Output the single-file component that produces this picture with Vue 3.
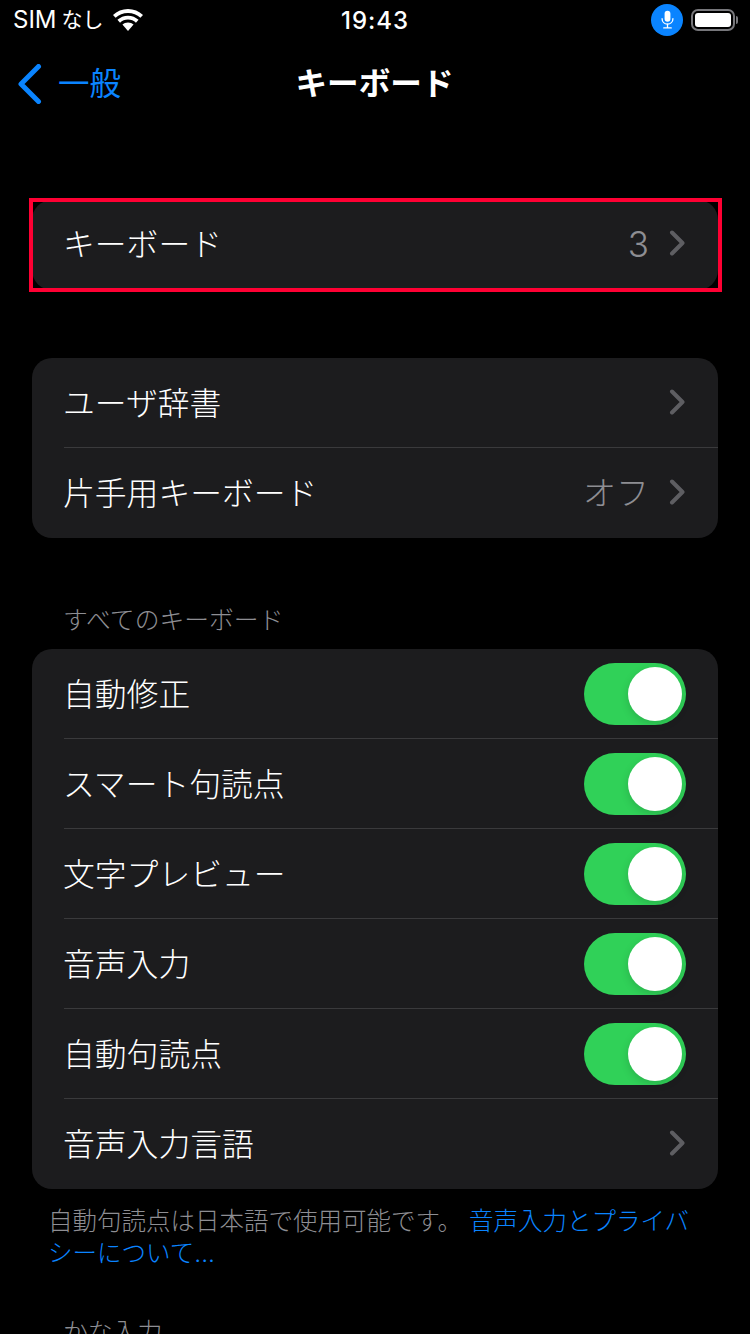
<script setup>
const group2 = [
  { label: 'ユーザ辞書', value: '' },
  { label: '片手用キーボード', value: 'オフ' },
]
const group3 = [
  { label: '自動修正', toggle: true },
  { label: 'スマート句読点', toggle: true },
  { label: '文字プレビュー', toggle: true },
  { label: '音声入力', toggle: true },
  { label: '自動句読点', toggle: true },
  { label: '音声入力言語', toggle: false },
]
</script>

<template>
  <div class="page">
    <header class="status">
      <div class="status-left">
        <span class="carrier">SIM<span class="nashi">なし</span></span>
        <svg class="wifi" width="30" height="22" viewBox="1.800 0.800 26.400 19.200" preserveAspectRatio="none">
          <path d="M15 4.2c4.2 0 8 1.6 10.9 4.3l2.3-2.5C24.700 2.700 20 .8 15 .8S5.300 2.700 1.800 6l2.300 2.500C7 5.800 10.800 4.200 15 4.200z" fill="#fff"/>
          <path d="M15 10c2.700 0 5.100 1 7 2.700l2.300-2.500C21.800 8 18.500 6.600 15 6.600s-6.800 1.400-9.300 3.600L8 12.700C9.900 11 12.300 10 15 10z" fill="#fff"/>
          <path d="M15 12.500c-1.900 0-3.600.7-4.900 1.900L15 20l4.900-5.600c-1.300-1.200-3-1.900-4.900-1.900z" fill="#fff"/>
        </svg>
      </div>
      <div class="clock">19:43</div>
      <div class="status-right">
        <span class="mic">
          <svg width="15" height="20" viewBox="0 0 18 24" fill="none">
            <rect x="5.500" y="1" width="7" height="13" rx="3.500" fill="#fff"/>
            <path d="M2.500 10.500c0 3.800 2.900 6.500 6.500 6.500s6.500-2.700 6.500-6.500" stroke="#fff" stroke-width="1.600" stroke-linecap="round"/>
            <path d="M9 17v4M4.500 21.500h9" stroke="#fff" stroke-width="1.600" stroke-linecap="round"/>
          </svg>
        </span>
        <span class="battery"><span class="battery-fill"></span></span>
        <span class="battery-cap"></span>
      </div>
    </header>

    <nav class="nav">
      <div class="back">
        <svg width="26" height="40" viewBox="0 0 26 40" fill="none">
          <path d="M21.500 2.500L4 20l17.500 17.500" stroke="#0a84ff" stroke-width="5" stroke-linecap="round" stroke-linejoin="round"/>
        </svg>
        <span>一般</span>
      </div>
      <h1 class="title">キーボード</h1>
    </nav>

    <main class="content">
      <div class="highlight-wrap">
        <section class="card">
          <div class="row first">
            <span class="label">キーボード</span>
            <span class="value num">3</span>
            <svg class="chev" width="16" height="26" viewBox="0 0 16 26" fill="none">
              <path d="M3 2.500L13.500 13 3 23.500" stroke="#5e5e62" stroke-width="4" stroke-linecap="round" stroke-linejoin="round"/>
            </svg>
          </div>
        </section>
        <div class="highlight"></div>
      </div>

      <section class="card second">
        <div v-for="r in group2" :key="r.label" class="row">
          <span class="label">{{ r.label }}</span>
          <span v-if="r.value" class="value">{{ r.value }}</span>
          <svg class="chev" width="16" height="26" viewBox="0 0 16 26" fill="none">
            <path d="M3 2.500L13.500 13 3 23.500" stroke="#5e5e62" stroke-width="4" stroke-linecap="round" stroke-linejoin="round"/>
          </svg>
        </div>
      </section>

      <h2 class="section-head">すべてのキーボード</h2>
      <section class="card">
        <div v-for="r in group3" :key="r.label" class="row">
          <span class="label">{{ r.label }}</span>
          <span v-if="r.toggle" class="switch"><span class="knob"></span></span>
          <svg v-else class="chev" width="16" height="26" viewBox="0 0 16 26" fill="none">
            <path d="M3 2.500L13.500 13 3 23.500" stroke="#5e5e62" stroke-width="4" stroke-linecap="round" stroke-linejoin="round"/>
          </svg>
        </div>
      </section>

      <p class="foot">自動句読点は日本語で使用可能です。 <span class="link">音声入力とプライバシーについて...</span></p>
      <h2 class="section-head kana">かな入力</h2>
    </main>
  </div>
</template>

<style>
html, body { margin: 0; background: #000; }
</style>

<style scoped>
.page {
  width: 750px;
  height: 1334px;
  overflow: hidden;
  background: #000;
  color: #fff;
  font-family: "Inter", "Noto Sans CJK JP", sans-serif;
}
.status {
  height: 40px;
  position: relative;
  display: flex;
  align-items: center;
  justify-content: space-between;
  padding: 0 12px 0 13px;
}
.status-left { display: flex; align-items: center; gap: 9px; }
.carrier { font-size: 24px; font-weight: 400; line-height: 40px; display: flex; align-items: center; }
.nashi { font-size: 21px; margin-left: 5px; }
.wifi { display: block; }
.clock {
  position: absolute;
  left: 0;
  right: 0;
  text-align: center;
  font-size: 24px;
  font-weight: 500;
  letter-spacing: 1px;
}
.status-right { display: flex; align-items: center; }
.mic {
  width: 32px;
  height: 32px;
  border-radius: 50%;
  background: #0a84ff;
  display: flex;
  align-items: center;
  justify-content: center;
  margin-right: 8px;
}
.battery {
  width: 44px;
  height: 22px;
  box-sizing: border-box;
  border: 2px solid #77777b;
  border-radius: 7px;
  padding: 2px;
  display: block;
  margin-top: -1px;
}
.battery-fill { display: block; height: 100%; background: #fff; border-radius: 3px; }
.battery-cap { width: 2px; height: 8px; background: #77777b; border-radius: 0 2px 2px 0; margin-left: 1px; margin-top: -1px; }
.nav {
  height: 88px;
  position: relative;
  display: flex;
  align-items: center;
}
.back {
  display: flex;
  align-items: center;
  gap: 15px;
  padding-left: 17px;
  color: #0a84ff;
  font-size: 31.500px;
  line-height: 40px;
}
.title {
  position: absolute;
  left: -1px;
  right: 0;
  margin: 0;
  text-align: center;
  font-size: 31.600px;
  font-weight: 700;
  line-height: 40px;
}
.content { padding: 72px 32px 0; }
.highlight-wrap { position: relative; height: 90px; }
.highlight {
  position: absolute;
  left: -3px;
  right: -4px;
  top: -2px;
  bottom: -2px;
  border: 4px solid #ff0033;
  box-sizing: border-box;
  pointer-events: none;
}
.card {
  background: #1c1c1e;
  border-radius: 20px;
  overflow: hidden;
}
.second { margin-top: 68px; }
.row {
  height: 90px;
  box-sizing: border-box;
  display: flex;
  align-items: center;
  margin-left: 32px;
  padding-right: 33px;
  position: relative;
}
.row.first { height: 88px; margin-bottom: 2px; }
.row:not(:last-child)::after {
  content: "";
  position: absolute;
  left: 0;
  right: 0;
  bottom: 0;
  height: 1px;
  background: #3a3a3c;
}
.label { flex: 1; font-size: 31.800px; font-weight: 300; line-height: 40px; padding-top: 2px; margin-left: -1px; color: #fff; }
.value { font-size: 33px; font-weight: 300; color: #8e8e93; margin-right: 20px; line-height: 40px; }
.num { font-size: 35px; }
.chev { display: block; margin-top: -2px; }
.row .switch { margin-right: -1px; }
.switch {
  width: 102px;
  height: 62px;
  border-radius: 31px;
  background: #30d158;
  position: relative;
  display: block;
}
.knob {
  position: absolute;
  top: 4px;
  right: 4px;
  width: 54px;
  height: 54px;
  border-radius: 50%;
  background: #fff;
  box-shadow: 0 3px 8px rgba(0, 0, 0, .15);
}
.section-head {
  margin: 0;
  padding: 66px 31px 0;
  height: 111px;
  box-sizing: border-box;
  font-size: 24.800px;
  font-weight: 300;
  line-height: 32px;
  color: #8e8e93;
}
.foot {
  margin: 0;
  padding: 16px 26px 0 16px;
  font-size: 24.500px;
  font-weight: 300;
  line-height: 32px;
  color: #8e8e93;
}
.link { color: #0a84ff; }
.kana { padding-top: 47px; height: 80px; }
</style>
